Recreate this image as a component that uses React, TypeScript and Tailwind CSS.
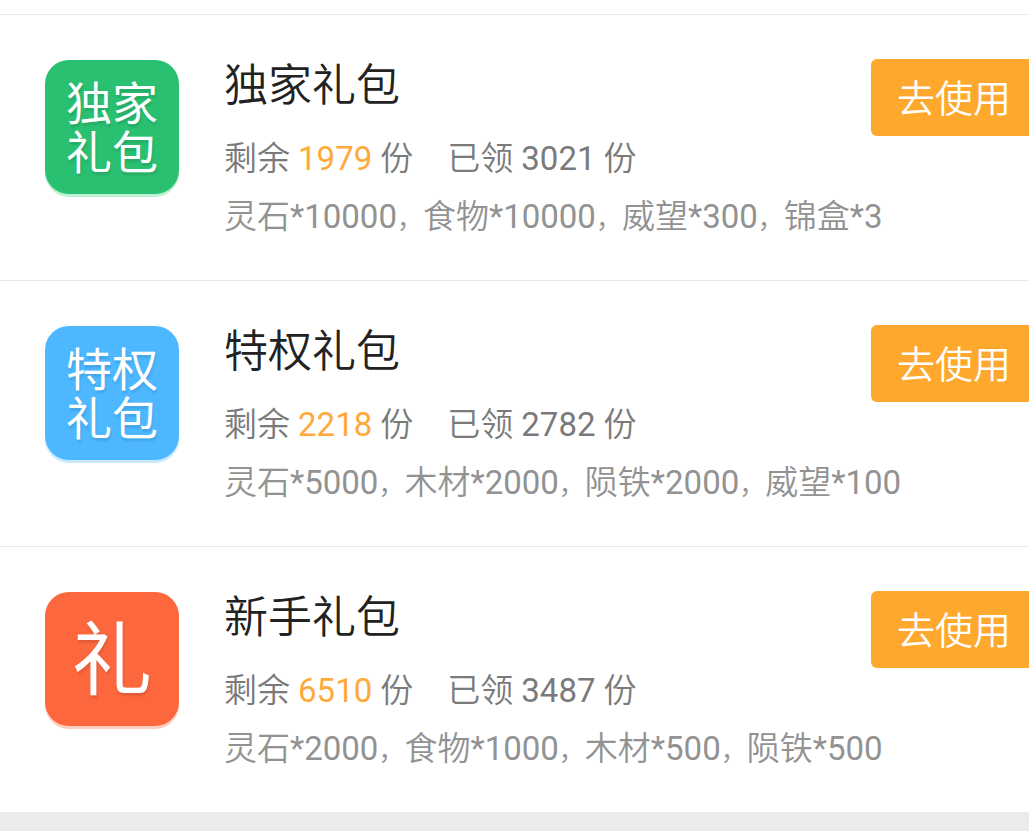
import { Fragment } from "react";
import clsx from "clsx";

interface GiftPack {
  id: string;
  title: string;
  icon: string[]; // one entry per line of the badge
  iconClass: string;
  left: number;
  claimed: number;
  items: { name: string; count: number }[];
}

const packs: GiftPack[] = [
  {
    id: "exclusive",
    title: "独家礼包",
    icon: ["独家", "礼包"],
    iconClass: "bg-[#29c071] shadow-[0_3px_0_#bdf0d5]",
    left: 1979,
    claimed: 3021,
    items: [
      { name: "灵石", count: 10000 },
      { name: "食物", count: 10000 },
      { name: "威望", count: 300 },
      { name: "锦盒", count: 3 },
    ],
  },
  {
    id: "privilege",
    title: "特权礼包",
    icon: ["特权", "礼包"],
    iconClass: "bg-[#4db8ff] shadow-[0_3px_0_#c9e9ff]",
    left: 2218,
    claimed: 2782,
    items: [
      { name: "灵石", count: 5000 },
      { name: "木材", count: 2000 },
      { name: "陨铁", count: 2000 },
      { name: "威望", count: 100 },
    ],
  },
  {
    id: "newbie",
    title: "新手礼包",
    icon: ["礼"],
    iconClass: "bg-[#fc673e] shadow-[0_3px_0_#ffcdbf]",
    left: 6510,
    claimed: 3487,
    items: [
      { name: "灵石", count: 2000 },
      { name: "食物", count: 1000 },
      { name: "木材", count: 500 },
      { name: "陨铁", count: 500 },
    ],
  },
];

function PackIcon({ lines, className }: { lines: string[]; className: string }) {
  const single = lines.length === 1;

  return (
    <div
      className={clsx(
        "mt-px flex size-[134px] shrink-0 flex-col items-center justify-center rounded-3xl pt-1 text-white text-shadow-[1px_3px_2px_rgb(0_0_0/0.1)]",
        single ? "text-[80px] leading-none" : "text-[46px] leading-[49px]",
        className
      )}
    >
      {lines.map((line) => (
        <span key={line}>{line}</span>
      ))}
    </div>
  );
}

function PackRow({ pack }: { pack: GiftPack }) {
  return (
    <li className="flex items-start border-t border-[#e8e8e8] pt-11 pb-[34px] pl-[45px]">
      <PackIcon lines={pack.icon} className={pack.iconClass} />

      <div className="ml-[45px] min-w-0 flex-1 whitespace-nowrap">
        <h2 className="text-[44px] leading-[54px] font-[350] text-[#222]">{pack.title}</h2>

        <p className="mt-[17px] flex gap-[34px] text-[33px] leading-[58px] font-[350] text-[#7a7a7a]">
          <span>
            剩余 <span className="font-normal text-[#ffa93a]">{pack.left}</span> 份
          </span>
          <span>
            已领 <span className="font-normal">{pack.claimed}</span> 份
          </span>
        </p>

        <p className="text-[33px] leading-[58px] font-[350] text-[#929292]">
          {pack.items.map((item, i) => (
            <Fragment key={item.name}>
              {i > 0 && <span className="text-[26px] leading-none">，</span>}
              {item.name}
              <span className="font-normal">*{item.count}</span>
            </Fragment>
          ))}
        </p>
      </div>

      {/* Hangs slightly past the right edge of the list */}
      <button
        type="button"
        className="-mr-2 shrink-0 rounded-md bg-[#ffa82e] px-[26px] pt-1 text-[38px] leading-[73px] font-[350] text-white"
      >
        去使用
      </button>
    </li>
  );
}

export default function App() {
  return (
    <main className="min-h-screen overflow-hidden bg-[#ebebeb] font-[Roboto,'Noto_Sans_CJK_SC',sans-serif]">
      <ul className="bg-white pt-3.5">
        {packs.map((pack) => (
          <PackRow key={pack.id} pack={pack} />
        ))}
      </ul>
    </main>
  );
}
